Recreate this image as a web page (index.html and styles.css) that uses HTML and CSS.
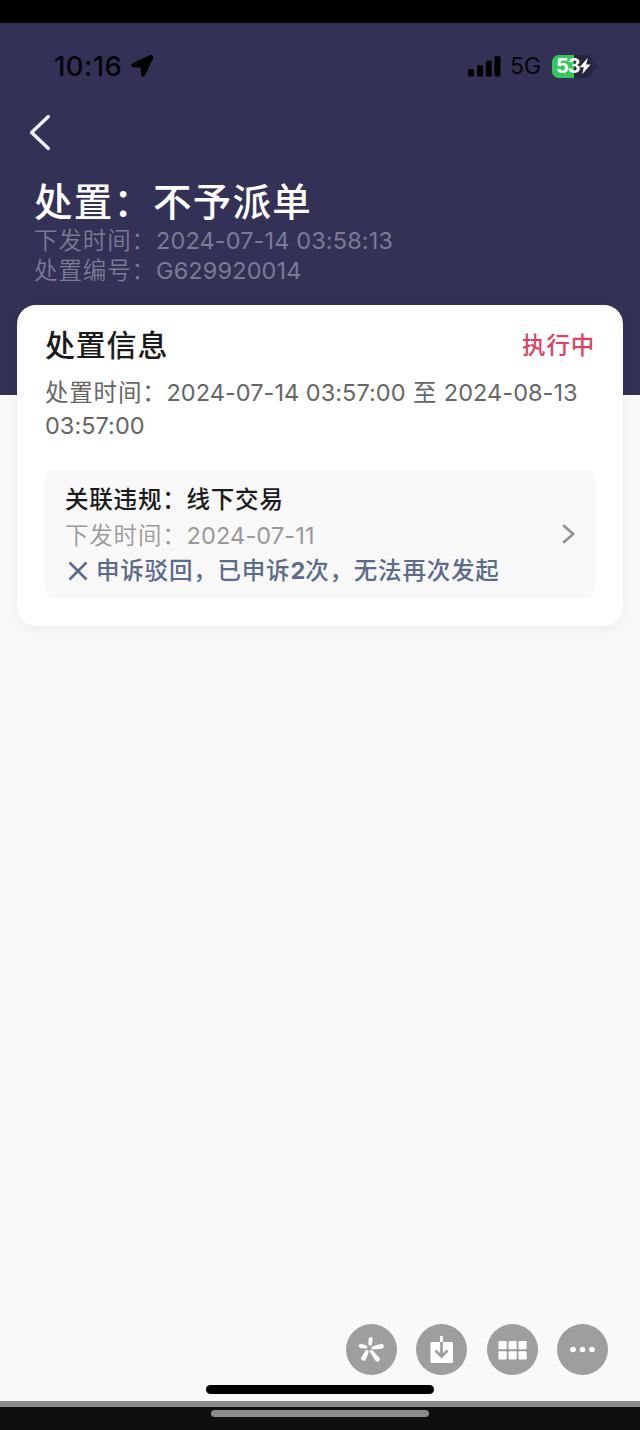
FILE: index.html
```html
<!DOCTYPE html>
<html lang="zh-CN">
<head>
<meta charset="utf-8">
<title>处置信息</title>
<link rel="stylesheet" href="styles.css">
</head>
<body>
<div class="top-strip"></div>
<header class="header">
  <div class="status">
    <span class="clock">10:16</span>
    <svg class="location" width="23" height="22" viewBox="0 0 23 22"><path d="M1.4 8.6 19.2.4Q22.4-.3 21.9 2.7L13.9 20Q12.2 22.8 10.4 20.6L10.2 12.3 1.6 11.8Q-1.4 10.4 1.4 8.6Z" stroke="#000" stroke-width=".7"/></svg>
    <svg class="signal" width="33" height="21" viewBox="0 0 33 21"><rect x="0" y="13" width="6" height="7.5" rx="1.6"/><rect x="9" y="9" width="6" height="11.5" rx="1.6"/><rect x="17.8" y="4.5" width="6" height="16" rx="1.6"/><rect x="26.5" y="0" width="6" height="20.5" rx="1.6"/></svg>
    <span class="network">5G</span>
    <div class="battery"><span class="level">53</span><svg width="12" height="18" viewBox="0 0 12 18"><path d="M8.8.8.6 10.2H4.8L3.2 17.2 11.6 7.4H7.2Z" fill="#fff"/></svg></div>
    <span class="nub"></span>
  </div>
  <svg class="back" width="24" height="38" viewBox="0 0 24 38"><path d="M19.4 2.6 2.6 18.5 19.4 34.4" fill="none" stroke="#edf1fb" stroke-width="3.4" stroke-linecap="round" stroke-linejoin="round"/></svg>
  <h1 class="title">处置：不予派单</h1>
  <p class="meta">下发时间：<span class="num">2024-07-14 03:58:13</span></p>
  <p class="meta">处置编号：<span class="num">G629920014</span></p>
</header>
<main class="content">
  <section class="card">
    <div class="card-head"><h2 class="card-title">处置信息</h2><span class="state">执行中</span></div>
    <div class="period">
      <p class="period-line"><span>处置时间：</span><span class="num">2024-07-14 03:57:00</span><span class="to">至</span><span class="num">2024-08-13</span></p>
      <p class="period-line"><span class="num">03:57:00</span></p>
    </div>
    <div class="violation">
      <div class="violation-text">
        <h3 class="violation-title">关联违规：线下交易</h3>
        <p class="issued">下发时间：<span class="num">2024-07-11</span></p>
        <p class="appeal"><svg width="20" height="20" viewBox="0 0 20 20"><path d="M1.5 1.5 18.5 18.5M18.5 1.5 1.5 18.5" stroke="#5c6a8b" stroke-width="2.6"/></svg><span>申诉驳回，已申诉<b>2</b>次，无法再次发起</span></p>
      </div>
      <svg class="chevron" width="14" height="20" viewBox="0 0 14 20"><path d="M1.2 1.3 11.2 10 1.2 18.7" fill="none" stroke="#909090" stroke-width="2.6"/></svg>
    </div>
  </section>
</main>
<nav class="tools">
  <span class="tool"><svg width="51" height="51" viewBox="0 0 51 51" fill="#fff" stroke="#fff" stroke-width=".5"><path d="M22.9 14.8Q23.3 13.1 25 13.3 26.7 13.5 26.6 15.2L25.4 21Q24 22 22.6 20.7Z"/><path d="M14.8 20.1Q12.9 20.2 13 22 13.1 23.7 15 23.9L20.5 24.3Q21.9 23 20.4 21.6Z"/><path d="M26 22.8 35.5 20.1Q37.4 20 37.6 21.9 37.7 24 35.8 24.5L26.5 25.2Q24.9 24 26 22.8Z"/><path d="M20.2 26.1Q22.6 25.9 22.5 27.8L19.6 35.4Q18.3 37.2 16.5 36.3 14.8 35.4 15.5 33.5Z"/><path d="M24.2 26.2Q25.6 25.6 26.6 26.8L33.2 33.8Q34.3 35.6 32.9 37 31.1 38 29.6 36.5L24.3 28.2Q23.5 27 24.2 26.2Z"/></svg></span>
  <span class="tool"><svg width="51" height="51" viewBox="0 0 51 51"><rect x="14.5" y="18" width="22.5" height="21" rx="1.2" fill="#fff"/><path d="M24 12H27V18H24Z" fill="#fff"/><path d="M25.5 18V32M19.5 26.5 25.5 32.5 31.5 26.5" fill="none" stroke="#9e9e9e" stroke-width="2.7"/></svg></span>
  <span class="tool"><svg width="51" height="51" viewBox="0 0 51 51" fill="#fff"><rect x="11.5" y="17" width="8.2" height="8.2" rx="1"/><rect x="21.5" y="17" width="8.2" height="8.2" rx="1"/><rect x="31.5" y="17" width="8.2" height="8.2" rx="1"/><rect x="11.5" y="27.2" width="8.2" height="8.2" rx="1"/><rect x="21.5" y="27.2" width="8.2" height="8.2" rx="1"/><rect x="31.5" y="27.2" width="8.2" height="8.2" rx="1"/></svg></span>
  <span class="tool"><svg width="51" height="51" viewBox="0 0 51 51" fill="#fff"><circle cx="16" cy="25.5" r="2.8"/><circle cx="25.5" cy="25.5" r="2.8"/><circle cx="35" cy="25.5" r="2.8"/></svg></span>
</nav>
<div class="home-bar"></div>
<footer class="bottom-strip"><div class="bottom-bar"></div></footer>
</body>
</html>
```
FILE: styles.css
```css
* { box-sizing: border-box; margin: 0; padding: 0; }
body { width: 640px; height: 1430px; display: flex; flex-direction: column; overflow: hidden; background: #f9f9f9; font-family: Inter, "Noto Sans CJK SC", sans-serif; }
svg { display: block; flex: none; }
h1, h2, h3, p { font-weight: 400; white-space: nowrap; }
.top-strip { height: 23px; background: #000; flex: none; }
.header { height: 372px; flex: none; background: #333256; }
.status { height: 86px; display: flex; align-items: center; padding-left: 54px; }
.clock { width: 77px; font-size: 27.5px; line-height: 30px; font-weight: 550; letter-spacing: .4px; color: #050509; }
.location { width: 23px; height: 22px; }
.signal { margin-left: 314px; }
.network { width: 41px; margin-left: 9px; margin-right: 1px; font-size: 23px; line-height: 28px; color: #07070d; }
.battery { width: 41px; height: 23px; display: flex; align-items: center; padding-left: 4px; border-radius: 7px; background: linear-gradient(90deg, #35c759 0 22px, #252640 22px); }
.level { width: 23px; font-size: 20px; line-height: 23px; font-weight: 700; letter-spacing: -1px; color: #fff; }
.nub { width: 2px; height: 6px; margin-left: 1px; border-radius: 0 2px 2px 0; background: #252640; }
.back { margin: 5px 0 0 29px; }
.title { margin: 27px 0 0 34px; font-size: 38.5px; line-height: 47px; font-weight: 500; letter-spacing: 1.2px; color: #fff; }
.meta { margin-left: 34px; font-size: 23.5px; line-height: 29.5px; letter-spacing: .9px; color: #7b7a95; font-weight: 350; }
.num { letter-spacing: 0; font-weight: 400; }
.meta .num { letter-spacing: .12px; }
.content { flex: 1; margin-top: -90px; padding: 0 17px; }
.card { height: 321px; padding: 17px 28px 28px; border-radius: 19px; background: #fff; box-shadow: 0 3px 16px rgba(0, 0, 0, .06); }
.card-head { display: flex; justify-content: space-between; align-items: center; height: 42px; }
.card-title { font-size: 30px; font-weight: 500; letter-spacing: .8px; color: #1b1b1b; }
.state { padding-top: 1px; font-size: 23.5px; font-weight: 500; letter-spacing: .8px; color: #e43e63; }
.period { margin-top: 12px; font-size: 23.5px; line-height: 33px; font-weight: 350; letter-spacing: .8px; color: #666; }
.period-line { display: flex; height: 33px; }
.period .num { letter-spacing: .04px; }
.to { margin: 0 6.5px 0 7.5px; }
.violation { height: 128px; margin-top: 28px; padding: 12px 19px 0 20px; display: flex; justify-content: space-between; border-radius: 9px; background: #f8f8f8; }
.violation-text { line-height: 35.5px; font-size: 23.5px; letter-spacing: .8px; }
.violation-title { font-size: 23.5px; font-weight: 500; color: #1b1b1b; }
.issued { font-weight: 350; color: #999; }
.issued .num { letter-spacing: .15px; }
.appeal { display: flex; align-items: center; gap: 8px; padding-left: 3px; font-weight: 500; color: #5c6a8b; }
.appeal b { font-weight: 700; letter-spacing: 0; }
.chevron { margin-top: 42px; }
.tools { display: flex; justify-content: flex-end; gap: 19.3px; padding-right: 32px; height: 51px; margin-bottom: 10px; }
.tool { width: 51px; height: 51px; border-radius: 50%; background: #9e9e9e; }
.home-bar { width: 228px; height: 9px; flex: none; margin: 0 0 7px 206px; border-radius: 5px; background: #000; }
.bottom-strip { height: 29px; flex: none; padding: 3px 0 0 211px; background: #0f0f0f; border-top: 6px solid #8b8b8b; }
.bottom-bar { width: 218px; height: 7px; border-radius: 4px; background: #8b8b8b; }
```
